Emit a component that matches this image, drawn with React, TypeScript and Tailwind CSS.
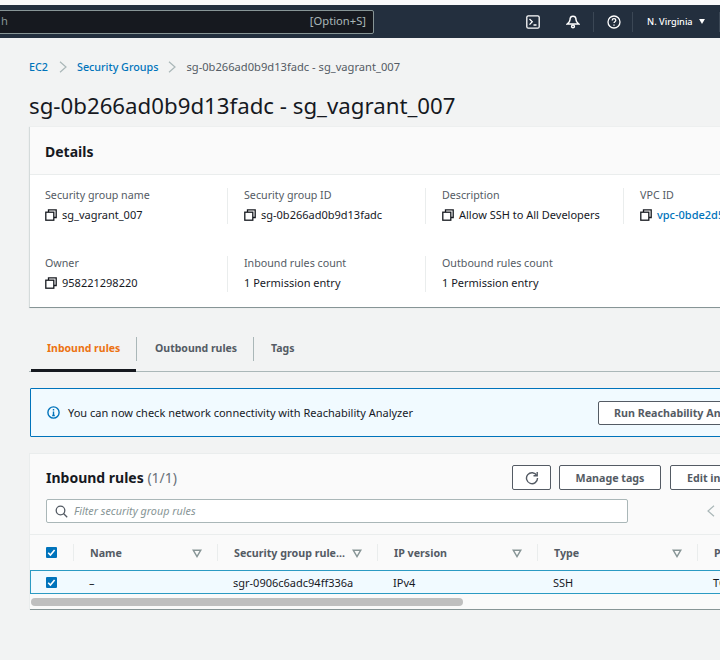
import React from "react";

const Copy = () => (
  <svg width="12" height="12" viewBox="0 0 12 12" fill="none" stroke="#16191f" strokeWidth="1.3" className="shrink-0">
    <path d="M3.5 3V.8h7.7v7.7H9" />
    <rect x="0.8" y="3.2" width="8" height="8" />
  </svg>
);

const Caret = () => (
  <svg width="10" height="9" viewBox="0 0 10 9" fill="none" stroke="#879596" strokeWidth="1.4" className="shrink-0">
    <path d="M1.2 1.2h7.6L5 7.6z" />
  </svg>
);

const Check = () => (
  <span className="w-[11px] h-[11px] bg-[#0073bb] rounded-[1px] flex items-center justify-center shrink-0">
    <svg width="9" height="9" viewBox="0 0 9 9" fill="none" stroke="#fff" strokeWidth="1.6">
      <path d="M1.2 4.8l2.2 2.2 4.2-5" />
    </svg>
  </span>
);

const Field = ({ label, value, copy, link, divider }: { label: string; value: string; copy?: boolean; link?: boolean; divider?: boolean }) => (
  <div className={`shrink-0 h-9 ${divider ? "w-[198px] pl-4 border-l border-[#eaeded]" : "w-[197px] pl-[15px]"}`}>
    <div className="text-[10.7px] leading-[16px] text-[#545b64] whitespace-nowrap -mt-[1px]">{label}</div>
    <div className="flex items-center gap-[5px] mt-1 text-[11px] leading-[16px] whitespace-nowrap">
      {copy && <Copy />}
      <span className={link ? "text-[#0073bb] font-medium" : "text-[#16191f]"}>{value}</span>
    </div>
  </div>
);

const Btn = ({ className, children }: { className: string; children: React.ReactNode }) => (
  <div className={`h-[25px] pt-[2px] shrink-0 border border-[#545b64] rounded-[2px] bg-white text-[10.7px] font-bold text-[#545b64] flex items-center justify-center whitespace-nowrap ${className}`}>{children}</div>
);

const Th = ({ w, label }: { w: string; label: string }) => (
  <div className={`${w} shrink-0 flex items-center h-full`}>
    <div className="flex-1 flex items-center h-[17px] pt-[2px] border-r border-[#eaeded] justify-between pl-4 pr-[15px] font-bold text-[#545b64] text-[10.7px] whitespace-nowrap overflow-hidden">
      <span>{label}</span>
      <Caret />
    </div>
  </div>
);

const Chevron = ({ className }: { className: string }) => (
  <svg className={className} width="8" height="12" viewBox="0 0 8 12" fill="none" stroke="#aab7b8" strokeWidth="1.2">
    <path d="M1 .8L7 6l-6 5.200" />
  </svg>
);

export default function App() {
  return (
    <div className="w-[720px] h-[660px] overflow-hidden bg-[#f2f3f3] text-[#16191f] flex flex-col" style={{ fontFamily: '"Noto Sans", sans-serif' }}>
      <div className="h-[5px] bg-[#f9f9fa] shrink-0" />
      <div className="h-[33px] bg-[#232f3e] shrink-0 flex items-center">
        <div className="w-[382px] h-[24px] bg-[#16191f] border border-[#879596] rounded-[2px] -ml-2 flex items-center justify-between pl-2 pr-[7px] text-[11.2px] text-[#aab7b8] shrink-0">
          <span className="text-[#879596]">h</span>
          <span>[Option+S]</span>
        </div>
        <div className="flex items-center ml-[152px] text-white">
          <svg width="14" height="14" viewBox="0 0 14 14" fill="none" stroke="#fff" strokeWidth="1.3">
            <rect x="0.8" y="0.8" width="12.4" height="12.4" rx="1.5" />
            <path d="M3.5 4l2.8 2.8-2.8 2.8M7.5 10h3" />
          </svg>
          <svg className="ml-[26px]" width="14" height="14" viewBox="0 0 14 14" fill="none" stroke="#fff" strokeWidth="1.5">
            <path d="M7 1.2c-2.2 0-3 1.8-3 3.6 0 1.6-1 3-2.8 4.2h11.6C11 7.8 10 6.400 10 4.800c0-1.800-.8-3.600-3-3.600z" />
            <circle cx="7" cy="11.400" r="1.400" />
          </svg>
          <div className="w-px h-5 bg-[#3b4755] ml-[13px]" />
          <svg className="ml-[13px]" width="14" height="14" viewBox="0 0 14 14" fill="none" stroke="#fff" strokeWidth="1.300">
            <circle cx="7" cy="7" r="6" />
            <path d="M5.200 5.400c0-1 .8-1.700 1.800-1.700s1.800.7 1.800 1.600c0 1.400-1.800 1.400-1.800 2.800" />
            <path d="M7 9.500v1.200" />
          </svg>
          <div className="w-px h-5 bg-[#3b4755] ml-[11px]" />
          <span className="ml-[14px] text-[9.2px] font-medium whitespace-nowrap">N. Virginia</span>
          <svg className="ml-[6px]" width="6" height="5" viewBox="0 0 7 6" fill="#fff"><path d="M0 0h7L3.500 6z" /></svg>
          <div className="w-px h-5 bg-[#3b4755] ml-[14px]" />
        </div>
      </div>

      <div className="pl-[29px] w-[900px]">
        <div className="mt-[21px] h-4 flex items-center leading-4 whitespace-nowrap">
          <span className="text-[10.75px] text-[#0073bb] font-medium">EC2</span>
          <Chevron className="ml-[11px]" />
          <span className="ml-[10px] text-[10.75px] text-[#0073bb] font-medium">Security Groups</span>
          <Chevron className="ml-[10px]" />
          <span className="ml-[10px] text-[11.15px] text-[#545b64]">sg-0b266ad0b9d13fadc - sg_vagrant_007</span>
        </div>

        <h1 className="mt-[16px] text-[22.25px] leading-[30px] font-normal text-[#16191f] whitespace-nowrap">sg-0b266ad0b9d13fadc - sg_vagrant_007</h1>

        <div className="mt-[6px] w-[860px] h-[181px] bg-white border-b border-[#879596] border-l border-l-[#d5dbdb] shadow-[0_0_1px_#d5dbdb]">
          <div className="h-[48px] pt-[2px] bg-[#fafafa] border-b border-[#eaeded] flex items-center pl-[15px] text-[14px] font-bold">Details</div>
          <div className="flex pt-[13px] h-[81px]">
            <Field label="Security group name" value="sg_vagrant_007" copy />
            <Field label="Security group ID" value="sg-0b266ad0b9d13fadc" copy divider />
            <Field label="Description" value="Allow SSH to All Developers" copy divider />
            <Field label="VPC ID" value="vpc-0bde2d5a1f7c3" copy link divider />
          </div>
          <div className="flex">
            <Field label="Owner" value="958221298220" copy />
            <Field label="Inbound rules count" value="1 Permission entry" divider />
            <Field label="Outbound rules count" value="1 Permission entry" divider />
          </div>
        </div>

        <div className="mt-[28px] h-[36px] w-[860px] border-b border-[#aab7b8] flex text-[10.5px] font-bold text-[#545b64] whitespace-nowrap">
          <div className="ml-[2px] w-[105px] h-[36px] border-b-[3px] border-[#16191f] pl-4 pt-[5px] text-[#ec7211]">Inbound rules</div>
          <div className="w-px h-6 bg-[#aab7b8] mt-[1px]" />
          <div className="pl-[18px] w-[116px] pt-[5px]">Outbound rules</div>
          <div className="w-px h-6 bg-[#aab7b8] mt-[1px]" />
          <div className="pl-[17px] pt-[5px]">Tags</div>
        </div>

        <div className="mt-4 ml-[1px] w-[860px] h-[49px] bg-[#f1faff] border border-[#0073bb] rounded-[1px] flex items-center whitespace-nowrap">
          <svg className="ml-4" width="13" height="13" viewBox="0 0 13 13" fill="none" stroke="#0073bb" strokeWidth="1.400">
            <circle cx="6.500" cy="6.500" r="5.600" />
            <path d="M6.500 5.500v4M5.200 9.500h2.600M6.500 3v1.500" />
          </svg>
          <span className="ml-2 pt-[2px] text-[11px] text-[#16191f]">You can now check network connectivity with Reachability Analyzer</span>
          <Btn className="ml-[185px] w-[190px] !h-[24px] !justify-start pl-[15px]">Run Reachability Analyzer</Btn>
        </div>

        <div className="mt-[16px] w-[860px] h-[157px] bg-[#fafafa] border-l border-t border-[#eaeded] relative">
          <div className="h-[81px] pl-4 border-b border-[#eaeded]">
            <div className="flex items-center h-[45px] pt-[2px]">
              <span className="text-[14px] font-bold whitespace-nowrap">Inbound rules <span className="font-normal text-[#687078]">(1/1)</span></span>
              <Btn className="ml-[335px] w-[39px] !pt-0">
                <svg width="14" height="14" viewBox="0 0 14 14" fill="none" stroke="#545b64" strokeWidth="1.400">
                  <path d="M11.800 4.500A5.500 5.500 0 1 0 12.500 7" />
                  <path d="M12.200 1v3.800H8.500" />
                </svg>
              </Btn>
              <Btn className="ml-[8px] w-[102px]">Manage tags</Btn>
              <Btn className="ml-[9px] w-[110px] !justify-start pl-4">Edit inbound rules</Btn>
            </div>
            <div className="flex items-center">
              <div className="w-[582px] h-[24px] bg-white border border-[#aab7b8] rounded-[2px] flex items-center pl-2 text-[10.8px] italic text-[#879596] whitespace-nowrap">
                <svg width="13" height="13" viewBox="0 0 13 13" fill="none" stroke="#545b64" strokeWidth="1.300">
                  <circle cx="5.500" cy="5.500" r="4.300" />
                  <path d="M8.500 8.500l3.700 3.700" />
                </svg>
                <span className="ml-[6px]">Filter security group rules</span>
              </div>
              <svg className="ml-[79px]" width="8" height="12" viewBox="0 0 8 12" fill="none" stroke="#aab7b8" strokeWidth="1.200"><path d="M7 .8L1 6l6 5.200" /></svg>
            </div>
          </div>
          <div className="h-[35px] flex items-center pl-4">
            <div className="w-[28px] h-[17px] flex items-center border-r border-[#eaeded] shrink-0"><Check /></div>
            <Th w="w-[144px]" label="Name" />
            <Th w="w-[160px]" label="Security group rule..." />
            <Th w="w-[160px]" label="IP version" />
            <Th w="w-[160px]" label="Type" />
            <span className="pl-4 pt-[2px] text-[10.7px] font-bold text-[#545b64]">Protocol</span>
          </div>
          <div className="h-[24px] bg-[#f1faff] border border-[#2b9ac3] flex items-center pl-[15px] text-[11px] whitespace-nowrap">
            <Check />
            <span className="ml-[32px] w-[144px] pt-[2px]">–</span>
            <span className="w-[160px] pt-[2px]">sgr-0906c6adc94ff336a</span>
            <span className="w-[160px] pt-[2px]">IPv4</span>
            <span className="w-[160px] pt-[2px]">SSH</span>
            <span className="pt-[2px]">TCP</span>
          </div>
          <div className="h-[16px] pt-[4px] pl-[1px] bg-[#fafafa] border-b border-[#879596]">
            <div className="w-[432px] h-2 rounded-full bg-[#bfbfbf]" />
          </div>
        </div>
      </div>
    </div>
  );
}
